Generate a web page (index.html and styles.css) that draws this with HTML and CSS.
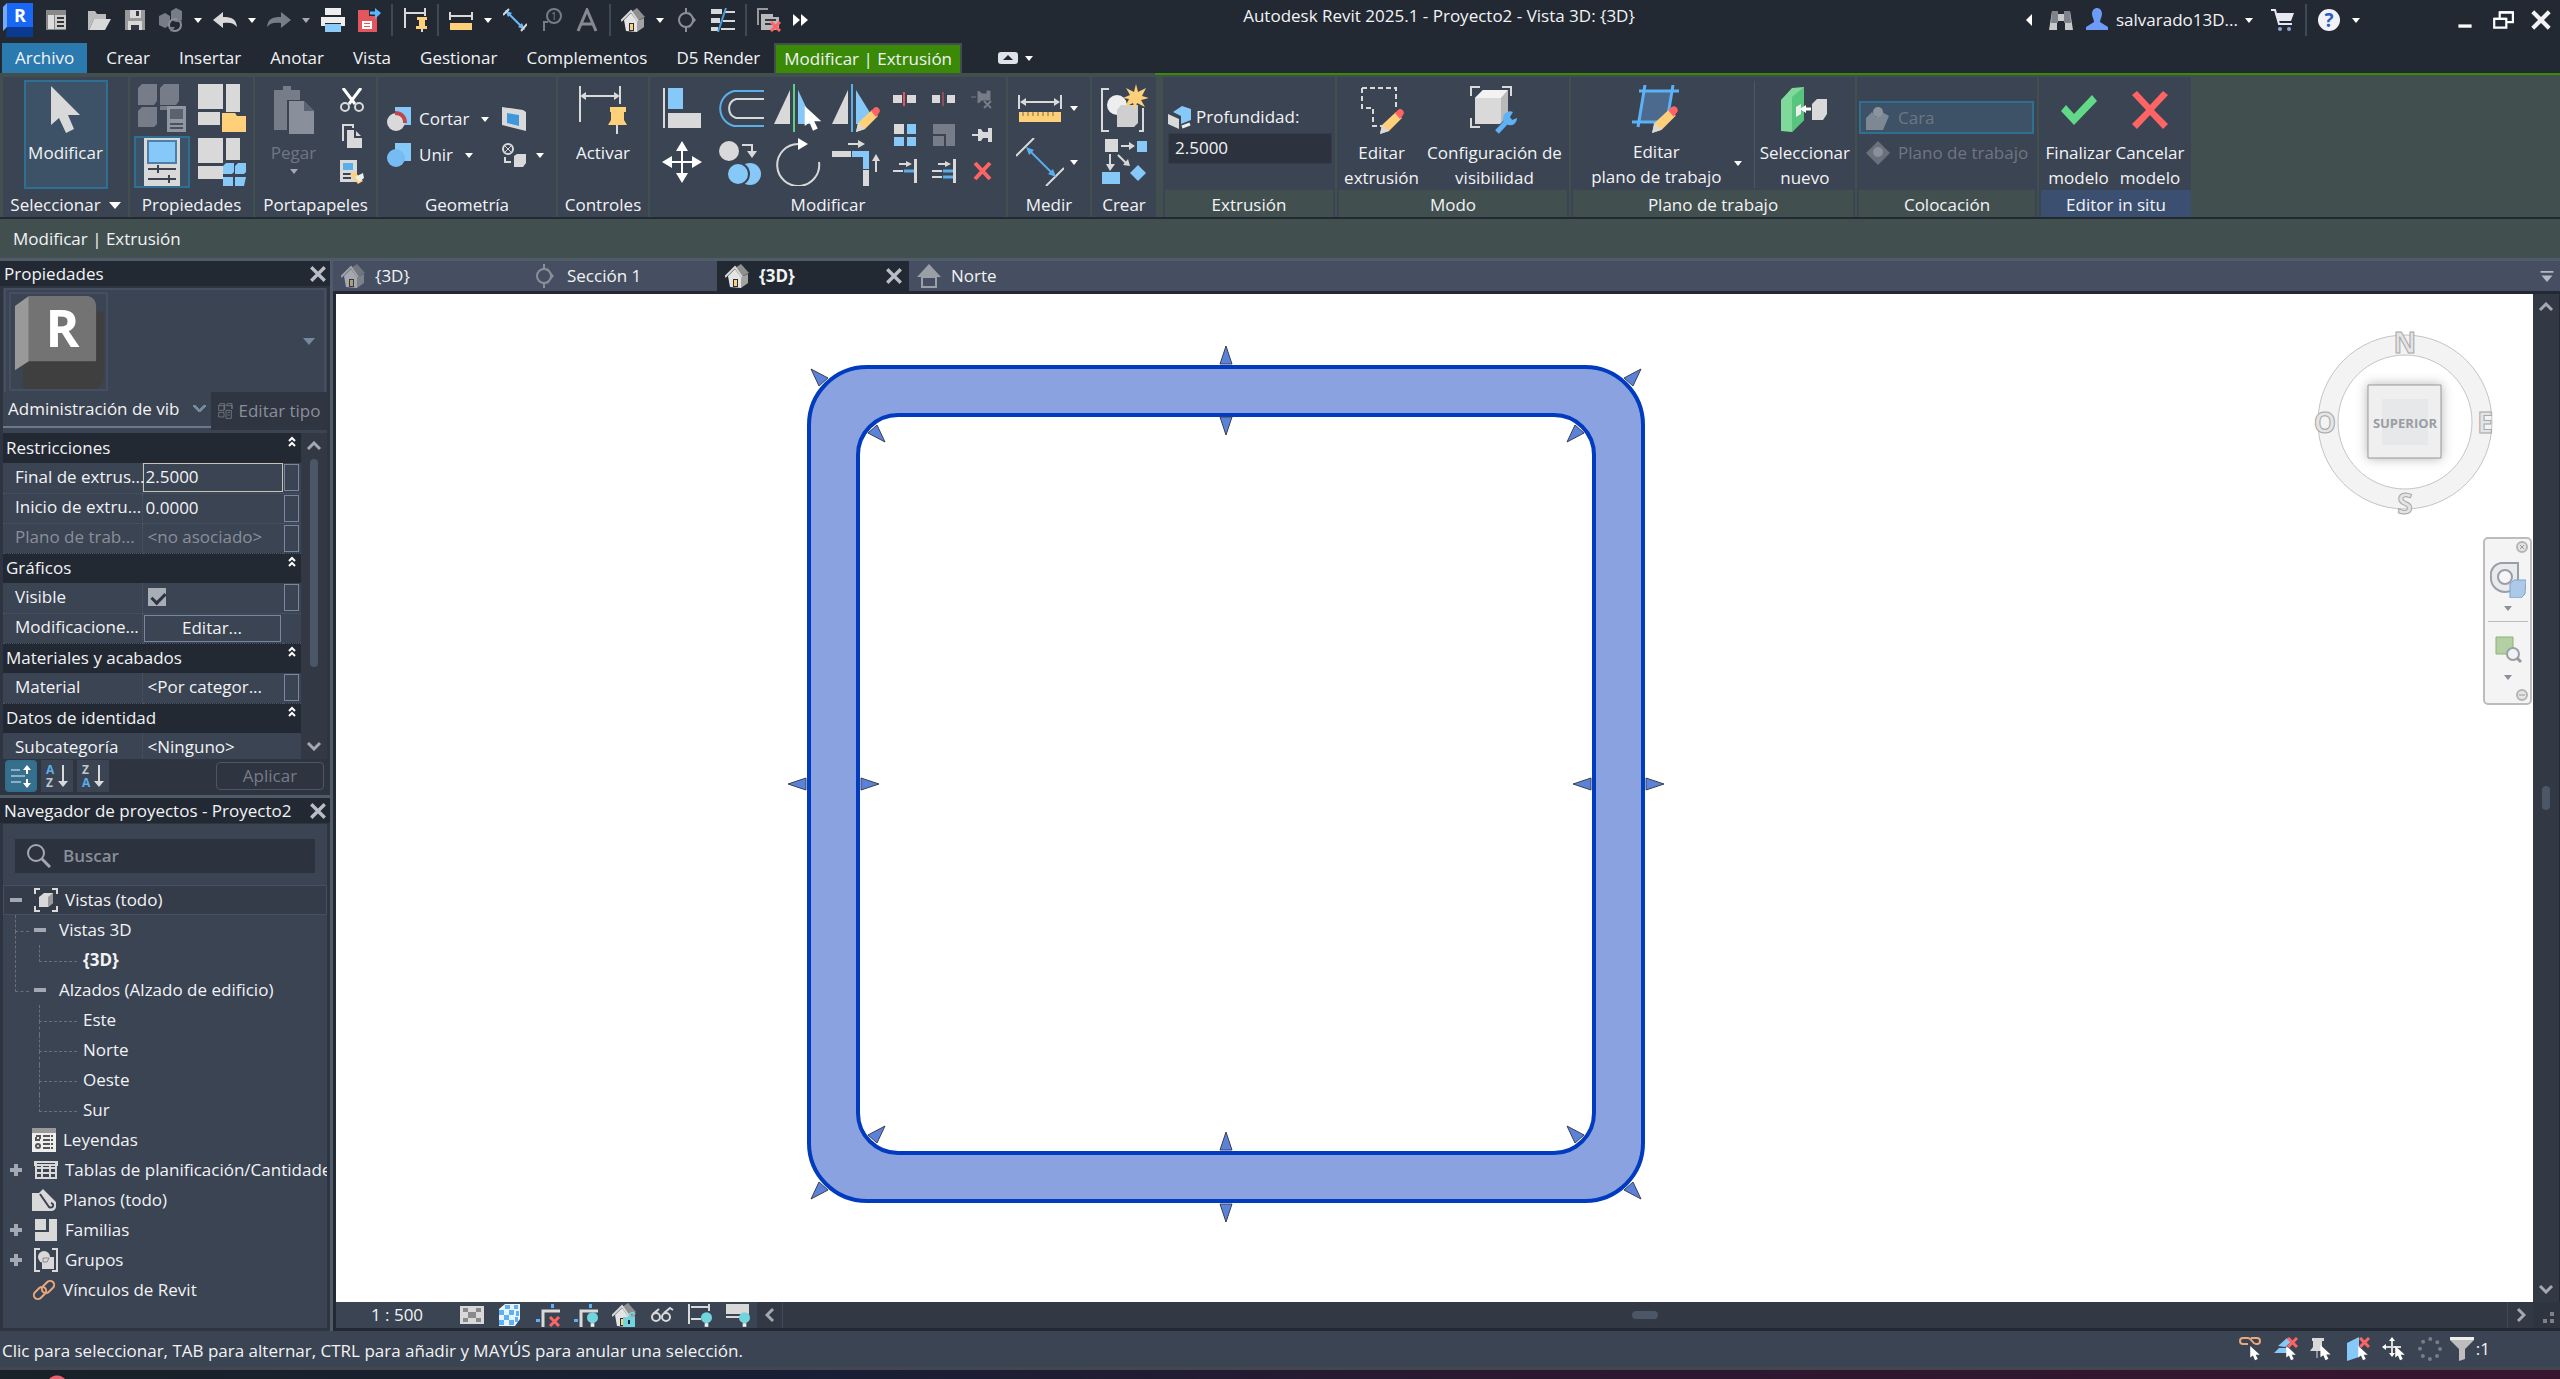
FILE: index.html
```html
<!DOCTYPE html>
<html lang="es">
<head>
    <meta charset="UTF-8">
    <meta name="viewport" content="width=device-width, initial-scale=1.0">
    <title>Autodesk Revit 2025.1 - Proyecto2 - Vista 3D: {3D}</title>
    <link rel="stylesheet" href="styles.css">
</head>
<body>

    <!-- Símbolos reutilizados -->
    <svg class="sprite" aria-hidden="true">
        <symbol id="house" viewBox="0 0 24 24">
            <path d="M3 12 10 5l6 8v11l-11-1z" fill="#e4e4e4"/>
            <path d="m16 13 7-3v9l-7 5z" fill="#a3a3a3"/>
            <path d="m10 4 6-4 8 9-8 4z" fill="#8f8f8f"/>
            <path d="m0 13 10-10 7 10" fill="none" stroke="#d9d9d9" stroke-width="2"/>
            <path d="M8 15h5v8H8z" fill="#2a2f38"/><path d="M9 16h3v6H9z" fill="#ffd07a"/>
        </symbol>
        <symbol id="cursor" viewBox="0 0 14 22">
            <path d="M0 0v17l4-3 3 7 4-2-3-6h6z" fill="#fff"/>
        </symbol>
        <symbol id="pencil" viewBox="0 0 24 26">
            <path d="M0 26 2 17 16 4l6 6L9 23z" fill="#ffd07a"/>
            <path d="M0 26 2 17l7 6z" fill="#d9d9d9"/>
            <path d="m15 5 3-3c3-3 8 2 5 5l-3 4z" fill="#ff6464"/>
        </symbol>
        <symbol id="section" viewBox="0 0 20 24">
            <path d="m11 3 8 9-8 9c7-4 7-14 0-18z" fill="#8a8f99"/>
            <circle cx="9" cy="12" r="7" fill="none" stroke="#8a8f99" stroke-width="2"/>
            <path d="M9 0v5M9 19v5" stroke="#8a8f99" stroke-width="2"/>
        </symbol>
        <symbol id="close" viewBox="0 0 16 16">
            <path d="m2 2 12 12M14 2 2 14" stroke="currentColor" stroke-width="3" fill="none"/>
        </symbol>
        <symbol id="bulb" viewBox="0 0 12 16">
            <circle cx="6" cy="6" r="6" fill="#72d5de"/><path d="M4 12h4v4H4z" fill="#eee"/>
        </symbol>
        <symbol id="up2" viewBox="0 0 10 12">
            <path d="m2 5 3-3 3 3M2 10l3-3 3 3" stroke="#fff" stroke-width="2" fill="none"/>
        </symbol>
    </svg>

    <!-- Barra de título -->
    <header class="titlebar">
        <div class="quick">
            <button class="logo" aria-label="Revit"><svg viewBox="0 0 32 34"><path d="M4 0h26v24H4z" fill="#1868f5"/><path d="M0 4 4 0v24l-4 4z" fill="#74a9ff"/><path d="M4 24h26v10H3z" fill="#0b3a92"/><text x="17" y="19" text-anchor="middle" font-size="18" font-weight="700" fill="#fff">R</text></svg></button>
            <button class="q first" aria-label="Inicio"><svg viewBox="0 0 24 24"><path d="M2 2h20v20H2z" fill="#888"/><path d="M4 7h6v14H4z" fill="#ddd"/><path d="M11 7h11v14H11z" fill="#ccc"/><path d="M13 10h7M13 14h7M13 18h7" stroke="#333" stroke-width="2"/></svg></button>
            <button class="q" aria-label="Abrir"><svg viewBox="0 0 24 24"><path d="M1 22V3h7l2 3h9v5H7L2 22z" fill="#bbb"/><path d="M7 11h17l-6 11H2z" class="w"/></svg></button>
            <button class="q" aria-label="Guardar"><svg viewBox="0 0 24 24"><path d="M2 2h20v20H2z" fill="#999"/><path d="M7 2h11v8H7zM5 13h14v9H5z" class="w"/><path d="M13 3h3v5h-3zM8 17h8v5H8z" fill="#333a45"/></svg></button>
            <button class="q" aria-label="Sincronizar"><svg viewBox="0 0 24 24"><path d="m0 8 6-3 5 3v9l-5 3-6-3zM12 3l5-3 6 3v9l-6 2-5-2z" class="g"/><circle cx="16" cy="17" r="6" class="ln" stroke="#8b8f97"/><path d="m20 9 3 5h-6zM12 24l-2-5h6z" class="g"/></svg></button>
            <button class="more" aria-label="Opciones de sincronización"><i class="caret"></i></button>
            <button class="q" aria-label="Deshacer"><svg viewBox="0 0 24 24"><path d="m0 12 10-8v5c9 0 13 2 14 10-3-4-7-5-14-4v5z" class="w"/></svg></button>
            <button class="more" aria-label="Lista deshacer"><i class="caret"></i></button>
            <button class="q" aria-label="Rehacer"><svg viewBox="0 0 24 24"><path d="M24 12 14 4v5C5 9 1 11 0 19c3-4 7-5 14-4v5z" class="g"/></svg></button>
            <button class="more dim" aria-label="Lista rehacer"><i class="caret"></i></button>
            <button class="q" aria-label="Imprimir"><svg viewBox="0 0 24 24"><path d="M4 0h16v7H4zM0 9h24v9h-4v-3H4v3H0z" fill="#eee"/><path d="M4 16h16v8H4z" fill="#8ccbf7"/></svg></button>
            <button class="q" aria-label="Exportar PDF"><svg viewBox="0 0 24 24"><path d="M1 2h11v6h8v16H1z" fill="#e4565e"/><path d="M13 5h6" stroke="#5db5ff" stroke-width="3"/><path d="m18 0 6 5-6 6z" fill="#5db5ff"/><path d="M5 13h10v8H5z" fill="#fff"/><path d="M7 15h6v1H7zM7 18h6v1H7z" fill="#e4565e"/></svg></button>
            <i class="sep"></i>
            <button class="q" aria-label="Activar controles"><svg viewBox="0 0 24 24"><path d="M2 0v20M22 0v8M2 5h20" class="lw"/><path d="M14 9h10v3h-2v6h3v3H13v-3h3v-6h-2z" class="y"/><path d="M19 21v3" class="lw"/></svg></button>
            <i class="sep"></i>
            <button class="q" aria-label="Medir"><svg viewBox="0 0 24 24"><path d="M1 4v8M23 4v8M1 8h22" class="lw"/><path d="M1 15h22v7H1z" class="y"/></svg></button>
            <button class="more" aria-label="Tipos de medida"><i class="caret"></i></button>
            <button class="q" aria-label="Cota alineada"><svg viewBox="0 0 24 24"><path d="m5 5 14 14" stroke="#6bb8f7" stroke-width="2"/><path d="m2 2 7 3-4 4zM22 22l-7-3 4-4z" fill="#6bb8f7"/><path d="m0 7 6-6M18 23l6-7" class="lw"/></svg></button>
            <button class="q" aria-label="Etiqueta"><svg viewBox="0 0 24 24"><circle cx="15" cy="8" r="7" class="ln" stroke="#777d88"/><text x="15" y="12" font-size="11" text-anchor="middle" class="g">1</text><path d="M9 14H5v9" class="ln" stroke="#777d88"/></svg></button>
            <button class="q" aria-label="Texto"><svg viewBox="0 0 24 24"><path d="m3 23 9-21 9 21M6 16h12" fill="none" stroke="#858992" stroke-width="3"/></svg></button>
            <i class="sep"></i>
            <button class="q" aria-label="Vista 3D"><svg><use href="#house"/></svg></button>
            <button class="more" aria-label="Vistas 3D"><i class="caret"></i></button>
            <button class="q" aria-label="Sección"><svg><use href="#section"/></svg></button>
            <button class="q" aria-label="Líneas finas"><svg viewBox="0 0 24 24"><path d="M0 1h11v5H0zM0 10h9v5H0zM0 19h7v4H0z" class="w"/><path d="M14 4h10M12 13h12M10 21h14" class="lw"/><path d="M15 0 7 24" stroke="#4d9fe0" stroke-width="2"/></svg></button>
            <i class="sep"></i>
            <button class="q" aria-label="Cerrar inactivas"><svg viewBox="0 0 24 24"><path d="M1 17V1h10" class="ln" stroke="#999"/><path d="M4 6h12v3h6v13H4z" fill="#b8b8b8"/><path d="M8 12h11M8 16h8" stroke="#333a45" stroke-width="2"/><path d="m14 14 9 9m0-9-9 9" stroke="#ff6464" stroke-width="3"/></svg></button>
            <button class="q small" aria-label="Más"><svg viewBox="0 0 16 12"><path d="m0 0 7 6-7 6zM8 0l7 6-7 6z" fill="#fff"/></svg></button>
        </div>
        <h1 class="title">Autodesk Revit 2025.1 - Proyecto2 - Vista 3D: {3D}</h1>
        <div class="account">
            <button class="q small" aria-label="Contraer búsqueda"><svg viewBox="0 0 16 12"><path d="M11 0v12L5 6z" fill="#fff"/></svg></button>
            <button class="q" aria-label="Buscar"><svg viewBox="0 0 24 24"><path d="M3 3h6v3h6V3h6l3 19h-8v-9h-8v9H0z" fill="#c9c9c9"/><path d="M3 3h6v12H2zM15 3h6l1 12h-7z" fill="#7d828b"/></svg></button>
            <button class="user"><svg viewBox="0 0 24 24"><path d="M7 6c0-8 10-8 10 0 0 3-2 5-2 8l8 5v3H1v-3l8-5c0-3-2-5-2-8z" fill="#6d9bf5"/></svg>salvarado13D...<i class="caret"></i></button>
            <button class="q" aria-label="Tienda"><svg viewBox="0 0 24 24"><path d="M0 2h4l4 14h13" fill="none" stroke="#e7e9f2" stroke-width="2"/><path d="M4 5h19l-3 8H7z" fill="#e7e9f2"/><circle cx="9" cy="21" r="2" fill="#8fa4d8"/><circle cx="18" cy="21" r="2" fill="#8fa4d8"/></svg></button>
            <i class="sep"></i>
            <button class="q" aria-label="Ayuda"><svg viewBox="0 0 24 24"><circle cx="12" cy="12" r="11" fill="#f1f3f8"/><text x="12" y="19" text-anchor="middle" font-size="19" font-weight="700" fill="#2f5fc0">?</text></svg></button>
            <button class="more" aria-label="Opciones de ayuda"><i class="caret"></i></button>
        </div>
        <div class="window-buttons">
            <button aria-label="Minimizar"><svg viewBox="0 0 20 20"><path d="M4 14h12v3H4z" fill="#fff"/></svg></button>
            <button aria-label="Restaurar"><svg viewBox="0 0 20 20"><path d="M7 8V3h12v9h-5M2 9h11v8H2z" fill="none" stroke="#fff" stroke-width="2"/><path d="M2 8h11v2H2zM7 2h12v2H7z" fill="#fff"/></svg></button>
            <button aria-label="Cerrar"><svg><use href="#close"/></svg></button>
        </div>
    </header>

    <!-- Pestañas de la cinta -->
    <nav class="ribbon-tabs">
        <button class="rtab file">Archivo</button>
        <button class="rtab">Crear</button>
        <button class="rtab">Insertar</button>
        <button class="rtab">Anotar</button>
        <button class="rtab">Vista</button>
        <button class="rtab">Gestionar</button>
        <button class="rtab">Complementos</button>
        <button class="rtab">D5 Render</button>
        <button class="rtab active">Modificar | Extrusión</button>
        <button class="collapse" aria-label="Contraer cinta"><svg viewBox="0 0 20 12"><rect width="20" height="12" rx="3" fill="#dfe2ea"/><path d="m10 3 5 5H5z" fill="#222933"/></svg><i class="caret"></i></button>
    </nav>

    <!-- Cinta de opciones -->
    <section class="ribbon">
        <div class="group">
            <div class="panel p-select">
                <div class="tools">
                    <button class="big on"><svg viewBox="0 0 48 48"><path d="M9 0v39l8-7 7 15 8-4-6-14h12z" class="w"/></svg>Modificar</button>
                </div>
                <h2>Seleccionar <i class="caret wide"></i></h2>
            </div>
            <div class="panel p-props">
                <div class="tools grid2">
                    <button class="ico" aria-label="Propiedades de tipo"><svg viewBox="0 0 48 48"><path d="M0 4 4 0h15v17l-3 4H0zM22 4l4-4h15v17l-3 4H22zM0 27l4-4h15v17l-3 3H0zM22 22h17v4H22z" class="g"/><path d="M29 22h19v26H29z" fill="#9197a2"/><path d="M32 25h13v10H32z" fill="#5b6270"/><path d="M32 40h13M32 44h13" stroke="#4a5160" stroke-width="2"/></svg></button>
                    <button class="ico" aria-label="Categorías de familia"><svg viewBox="0 0 48 48"><path d="M0 0h25v25H0zM28 0h14v28H28zM0 28h22v13H0z" class="w"/><path d="M24 29h13l2 3h9v16H24z" class="y"/></svg></button>
                    <button class="ico on" aria-label="Propiedades"><svg viewBox="0 0 48 48"><path d="M6 0h36v48H6z" class="w"/><path d="M10 3h28v22H10z" class="b" stroke="#4d7fa8" stroke-width="2"/><path d="M10 31h28M10 41h28M20 27v8M31 37v8" stroke="#3b4453" stroke-width="2"/></svg></button>
                    <button class="ico" aria-label="Tipos de familia"><svg viewBox="0 0 48 48"><path d="M0 0h25v25H0zM28 0h14v22H28zM0 28h25v13H0z" class="w"/><path d="m25 28 3-3h8v9l-2 2h-9zM37 28l3-3h8v9l-2 2h-9zM25 39h10v9H25zM37 39h11l-2 9h-9z" class="b"/></svg></button>
                </div>
                <h2>Propiedades</h2>
            </div>
            <div class="panel p-clip">
                <div class="tools">
                    <button class="big off" disabled><svg viewBox="0 0 48 48"><path d="M4 4h9V0h8v4h9v10H17v30H4z" fill="#777d88"/><path d="M19 15h15l10 10v23H19z" fill="#8a909b"/><path d="M34 15v10h10z" fill="#5b6270"/></svg>Pegar<i class="caret"></i></button>
                    <div class="stack">
                        <button class="sm" aria-label="Cortar al portapapeles"><svg viewBox="0 0 24 24"><path d="M3 0 15 16M21 0 9 16" stroke="#fff" stroke-width="3"/><circle cx="5" cy="19" r="4" class="lw"/><circle cx="19" cy="19" r="4" class="lw"/></svg></button>
                        <button class="sm" aria-label="Copiar al portapapeles"><svg viewBox="0 0 24 24"><path d="M3 17V1h10v3" class="lw"/><path d="M7 6h8l7 7v11H7z" class="w"/><path d="M15 6v7h7" fill="none" stroke="#3b4453" stroke-width="2"/></svg></button>
                        <button class="sm" aria-label="Igualar propiedades"><svg viewBox="0 0 24 24"><path d="M0 0h17v22H0z" class="w"/><path d="M3 3h10v7H3z" fill="#5aaeea"/><path d="M3 14h8M3 18h8" stroke="#3b4453" stroke-width="2"/><path d="m10 14 5-2 8 9-5 3z" class="y"/><path d="m15 17 8-4 1 5-5 4z" fill="#eee"/></svg></button>
                    </div>
                </div>
                <h2>Portapapeles</h2>
            </div>
            <div class="panel p-geo">
                <div class="tools geo">
                    <div class="line">
                        <button class="row"><svg viewBox="0 0 24 24"><path d="M8 0h16v18H8z" class="b"/><circle cx="9" cy="15" r="9" class="w"/><path d="M8 6c6 0 10 4 10 10" fill="none" stroke="#c0444c" stroke-width="4"/></svg>Cortar<i class="caret"></i></button>
                        <button class="sm" aria-label="Dividir cara"><svg viewBox="0 0 24 24"><path d="m0 0 21 3 3 2v19L0 18z" class="w"/><path d="m5 6 12 2v11L5 16z" fill="#3f98dc"/></svg></button>
                    </div>
                    <div class="line">
                        <button class="row"><svg viewBox="0 0 24 24"><path d="M8 0h16v18H8z" class="b"/><circle cx="9" cy="15" r="9" fill="#76bcf2"/></svg>Unir<i class="caret"></i></button>
                        <button class="sm wide" aria-label="Uniones de muro"><svg viewBox="0 0 24 24"><circle cx="6" cy="6" r="5" class="lw"/><path d="m3 3 6 6M9 3 3 9" stroke="#d9d9d9"/><path d="m12 13 3-2h9v9l-3 4h-9z" class="w"/><path d="M3 14v5h6" class="lw"/></svg><i class="caret"></i></button>
                    </div>
                </div>
                <h2>Geometría</h2>
            </div>
            <div class="panel p-ctrl">
                <div class="tools">
                    <button class="big"><svg viewBox="0 0 48 48"><path d="M1 0v36M41 0v18M3 10h36" class="lw"/><path d="m1 10 6-4v8zM41 10l-6-4v8z" class="w"/><path d="M31 21h16v5h-2v8l3 5H29l3-5v-8h-1z" class="y"/><path d="M38 39v9" class="lw"/></svg>Activar</button>
                </div>
                <h2>Controles</h2>
            </div>
            <div class="panel p-mod">
                <div class="tools">
                    <div class="grid4">
                        <button class="ico" aria-label="Alinear"><svg viewBox="0 0 48 48"><path d="M6 4v40" class="lw"/><path d="M10 4h15v21H10z" class="b"/><path d="M10 29h33v15H10z" class="w"/></svg></button>
                        <button class="ico" aria-label="Desfase"><svg viewBox="0 0 48 48"><path d="M48 7H18a18 18 0 0 0 0 35h30" class="ln" stroke="#5aaeea"/><path d="M48 15H20a10 10 0 0 0 0 19h28" class="lw"/></svg></button>
                        <button class="ico" aria-label="Simetría por eje"><svg viewBox="0 0 48 48"><path d="M16 6v34H0z" class="w"/><path d="m24 6 16 34H24z" class="b"/><path d="M20 0v48" stroke="#5ed083" stroke-width="2"/><use href="#cursor" x="30" y="22" width="18" height="26"/></svg></button>
                        <button class="ico" aria-label="Simetría dibujar eje"><svg viewBox="0 0 48 48"><path d="M16 6v34H0z" class="w"/><path d="m24 6 16 26-10 8h-6z" class="b"/><path d="M20 0v48" stroke="#5aaeea" stroke-width="2"/><use href="#pencil" x="24" y="22" width="24" height="26"/></svg></button>
                        <button class="ico" aria-label="Desplazar"><svg viewBox="0 0 48 48"><path d="M24 8v32M8 24h32" stroke="#fff" stroke-width="2"/><path d="m24 3 6 10H18zM24 45l6-10H18zM4 24l10-6v12zM44 24l-10-6v12z" fill="#fff"/></svg></button>
                        <button class="ico" aria-label="Copiar"><svg viewBox="0 0 48 48"><circle cx="13" cy="13" r="10" class="w"/><circle cx="34" cy="36" r="11" class="b"/><circle cx="22" cy="36" r="11" class="b" stroke="#3b4453" stroke-width="2"/><path d="M26 7h10v8" class="lw"/><path d="M31 13h10l-5 7z" class="w"/></svg></button>
                        <button class="ico" aria-label="Girar"><svg viewBox="0 0 48 48"><path d="M24 6a21 21 0 1 0 21 18" class="lw"/><path d="m24 0 10 6-10 6z" fill="#fff"/></svg></button>
                        <button class="ico" aria-label="Recortar en esquina"><svg viewBox="0 0 48 48"><path d="M0 13h19v6H0zM31 32h6v16h-6z" class="w"/><path d="M20 13h17v18h-6V19H20z" class="b"/><path d="M16 6h14M44 34V20" class="lw"/><path d="m26 2 7 4-7 4zM40 23l4-7 4 7z" class="w"/></svg></button>
                    </div>
                    <div class="grid3">
                        <button class="sm" aria-label="Dividir elemento"><svg viewBox="0 0 24 24"><path d="M0 8h9v8H0zM14 8h9v8h-9z" class="w"/><path d="M11 5v14" stroke="#e4565e" stroke-width="2"/></svg></button>
                        <button class="sm" aria-label="Dividir con separación"><svg viewBox="0 0 24 24"><path d="M0 8h8v8H0zM15 8h8v8h-8z" class="w"/><path d="M11 5v14" stroke="#e4565e" stroke-width="1"/></svg></button>
                        <button class="sm" aria-label="Desbloquear"><svg viewBox="0 0 24 24"><path d="M0 10h5M7 4l3 2v8l-3 2zM10 7h6V4h3v9h-9z" class="g" stroke="#777d88"/><path d="m13 14 7 7m0-7-7 7" stroke="#777d88" stroke-width="2"/></svg></button>
                        <button class="sm" aria-label="Matriz"><svg viewBox="0 0 24 24"><path d="M1 1h10v10H1z" class="w"/><path d="M14 1h9v10h-9zM1 14h10v9H1zM14 14h9v9h-9z" class="b"/></svg></button>
                        <button class="sm" aria-label="Escala"><svg viewBox="0 0 24 24"><path d="M1 1h22v22H14V11H1z" class="g"/><path d="M1 13h11v10H1z" class="g"/></svg></button>
                        <button class="sm" aria-label="Bloquear"><svg viewBox="0 0 24 24"><path d="M1 12h6" class="lw"/><path d="M7 6h3l2 3h5V5h4v14h-4v-4h-5l-2 3H7z" class="w"/></svg></button>
                        <button class="sm" aria-label="Recortar un elemento"><svg viewBox="0 0 24 24"><path d="M0 12h10" class="lw"/><path d="M11 12h11" stroke="#5aaeea" stroke-width="3"/><path d="M21 0h3v24h-3z" class="w"/><path d="M6 5h8" class="lw"/><path d="m13 2 6 3-6 3z" class="w"/></svg></button>
                        <button class="sm" aria-label="Recortar varios elementos"><svg viewBox="0 0 24 24"><path d="M0 12h10M0 18h10" class="lw"/><path d="M11 12h11M11 18h11" stroke="#5aaeea" stroke-width="3"/><path d="M21 0h3v24h-3z" class="w"/><path d="M6 5h8" class="lw"/><path d="m13 2 6 3-6 3z" class="w"/></svg></button>
                        <button class="sm" aria-label="Suprimir"><svg viewBox="0 0 24 24"><path d="m4 4 15 16M19 4 4 20" stroke="#ff6464" stroke-width="4"/></svg></button>
                    </div>
                </div>
                <h2>Modificar</h2>
            </div>
            <div class="panel p-meas">
                <div class="tools grid2">
                    <button class="ico" aria-label="Medir distancia"><svg viewBox="0 0 48 48"><path d="M3 11v14M45 11v14M5 18h38" class="lw"/><path d="m4 18 6-4v8zM44 18l-6-4v8z" class="w"/><path d="M3 28h42v10H3z" class="y"/><path d="M7 28v4m5-4v4m5-4v4m5-4v4m5-4v4m5-4v4m5-4v4" stroke="#7d6a45"/></svg></button>
                    <button class="more" aria-label="Opciones de medir"><i class="caret"></i></button>
                    <button class="ico" aria-label="Cota"><svg viewBox="0 0 48 48"><path d="m0 18 18-18M30 48l18-18" class="lw"/><path d="m13 12 24 24" stroke="#5aaeea" stroke-width="2"/><path d="m10 9 8 3-5 5zM40 39l-8-3 5-5z" fill="#5aaeea"/></svg></button>
                    <button class="more" aria-label="Opciones de cota"><i class="caret"></i></button>
                </div>
                <h2>Medir</h2>
            </div>
            <div class="panel p-new">
                <div class="tools grid2">
                    <button class="ico" aria-label="Crear grupo"><svg viewBox="0 0 48 48"><path d="M9 5H2v42h7M39 47h4V24" class="lw"/><circle cx="17" cy="21" r="10" fill="#eee"/><path d="m17 26 4-5h17v18l-4 4H17z" fill="#cfcfcf"/><path d="M36 0l2 8 8-4-4 8 7 2-8 2 4 7-8-4-2 7-2-7-8 4 4-8-6-1 7-3-4-7 8 4z" class="y"/></svg></button>
                    <button class="ico" aria-label="Crear similar"><svg viewBox="0 0 48 48"><path d="M5 1h13v13H5z" class="w"/><path d="M37 3h10v11H37zM2 34h18v12H2zM38 27l8 8-8 8-8-8z" class="b"/><path d="M21 8h10M10 16v11M18 17l8 8" class="lw"/><path d="m29 4 6 4-6 4zM6 26h9l-5 7zM23 27l7 1-2-7z" class="w"/></svg></button>
                </div>
                <h2>Crear</h2>
            </div>
        </div>
        <div class="group context">
            <div class="panel p-ext">
                <div class="tools depth">
                    <label for="depth"><svg viewBox="0 0 24 24"><path d="m0 9 11 5v10L0 19z" class="w"/><path d="m5 7 9-6 9 3v11l-10 4v-8z" class="b"/><path d="m14 22 8-3" stroke="#eee" stroke-width="3"/></svg>Profundidad:</label>
                    <input id="depth" type="text" value="2.5000">
                </div>
                <h2>Extrusión</h2>
            </div>
            <div class="panel p-mode">
                <div class="tools">
                    <button class="big"><svg viewBox="0 0 48 48"><path d="M4 2h34v22M4 2v20h11v18h10" fill="none" stroke="#d9d9d9" stroke-width="2" stroke-dasharray="5 3"/><use href="#pencil" x="22" y="22" width="24" height="26"/></svg>Editar<br>extrusión</button>
                    <button class="big"><svg viewBox="0 0 48 48"><path d="M1 10V1h9M32 1h9v9M1 32v9h9" class="lw"/><path d="m5 12 8-8h25v25l-8 9H5z" class="w"/><path d="m5 12 8-8h25l-7 8z" fill="#f2f2f2"/><path d="m31 12 7-8v25l-7 8z" fill="#b9b9b9"/><path d="m27 46 13-14" stroke="#5db1f5" stroke-width="5"/><path d="M43 26a7 7 0 1 0 4 6l-5 2-2-3z" fill="#5db1f5"/></svg>Configuración de<br>visibilidad</button>
                </div>
                <h2>Modo</h2>
            </div>
            <div class="panel p-plane">
                <div class="tools">
                    <button class="big plane"><svg viewBox="0 0 48 48"><path d="M13 6h27l-6 31H7z" fill="#4b6a8d"/><path d="M13 0 6 42M41 0l-5 30M7 6h40M0 37h32" stroke="#5db1f5" stroke-width="3"/><use href="#pencil" x="18" y="20" width="30" height="28"/></svg>Editar<br>plano de trabajo<i class="caret"></i></button>
                    <button class="big ruled"><svg viewBox="0 0 48 48"><path d="m0 14 11-12 12-1v33L11 46l-11-1z" fill="#7ed99b"/><path d="m11 11 12-10v33L11 46z" fill="#57c57d"/><path d="m15 21 5-3v10l-5 3z" fill="#eee"/><path d="M21 23h9" stroke="#fff" stroke-width="3"/><path d="m19 23 6-4v8z" fill="#fff"/><path d="m31 18 5-5h10v15l-4 6H31z" class="w"/></svg>Seleccionar<br>nuevo</button>
                </div>
                <h2>Plano de trabajo</h2>
            </div>
            <div class="panel p-place">
                <div class="tools placing">
                    <button class="row off on" disabled><svg viewBox="0 0 24 24"><path d="m0 12 6-6 4 5 6-5 7 4-6 14H0z" fill="#7d8894"/><circle cx="12" cy="6" r="5" fill="#8a949f"/></svg>Cara</button>
                    <button class="row off" disabled><svg viewBox="0 0 24 24"><path d="m12 0 12 12-12 12L0 12z" fill="#6a717d"/><circle cx="12" cy="11" r="5" fill="#8a909b"/></svg>Plano de trabajo</button>
                </div>
                <h2>Colocación</h2>
            </div>
            <div class="panel p-edit">
                <div class="tools">
                    <button class="big"><svg viewBox="0 0 48 48"><path d="m6 25 5-6 8 9 18-19 5 6-23 24z" fill="#62d987"/></svg>Finalizar<br>modelo</button>
                    <button class="big"><svg viewBox="0 0 48 48"><path d="m6 9 5-4 13 14L37 5l5 4-14 15 14 14-5 5-13-14-13 14-5-5 14-14z" class="r"/></svg>Cancelar<br>modelo</button>
                </div>
                <h2>Editor in situ</h2>
            </div>
        </div>
    </section>

    <div class="options-bar">Modificar | Extrusión</div>

    <main class="workspace">
        <!-- Paletas laterales -->
        <aside class="side">
            <section class="palette props">
                <header><h2>Propiedades</h2><button aria-label="Cerrar propiedades"><svg><use href="#close"/></svg></button></header>
                <div class="palette-body">
                    <button class="type-box" aria-label="Selector de tipo">
                        <svg viewBox="0 0 96 96"><path d="M12 68h68V18h14v66a12 12 0 0 1-12 12H12z" fill="#3f3f3f"/><path d="m4 12 14-10v66L4 77z" fill="#999"/><path d="M18 2h60a10 10 0 0 1 8 10v56H18z" fill="#737373"/><text x="52" y="54" text-anchor="middle" font-size="52" font-weight="700" fill="#fff">R</text></svg>
                        <i class="caret wide"></i>
                    </button>
                    <div class="type-row">
                        <select aria-label="Familia"><option>Administración de vib</option></select>
                        <button disabled><svg viewBox="0 0 24 24"><path d="M1 4h8v7H1zM12 4h9v5M1 14h8v7H1zM1 4l2-3h7v8l-1 2M12 4l2-3h7v8M12 11h8v12h-8zM14 14h4M14 18h4" fill="none" stroke="#8a8f99"/></svg>Editar tipo</button>
                    </div>
                    <div class="prop-grid">
                        <table>
                            <colgroup><col class="c-name"><col class="c-value"><col class="c-link"></colgroup>
                            <tr class="cat"><th colspan="3">Restricciones<svg><use href="#up2"/></svg></th></tr>
                            <tr><td><label for="p1">Final de extrus...</label></td><td><input id="p1" class="focus" type="text" value="2.5000"></td><td><button aria-label="Asociar final"></button></td></tr>
                            <tr><td><label for="p2">Inicio de extru...</label></td><td><input id="p2" type="text" value="0.0000"></td><td><button aria-label="Asociar inicio"></button></td></tr>
                            <tr class="dim"><td>Plano de trab...</td><td class="val">&lt;no asociado&gt;</td><td><button aria-label="Asociar plano"></button></td></tr>
                            <tr class="cat"><th colspan="3">Gráficos<svg><use href="#up2"/></svg></th></tr>
                            <tr><td><label for="p3">Visible</label></td><td class="val"><input id="p3" type="checkbox" checked></td><td><button aria-label="Asociar visible"></button></td></tr>
                            <tr><td>Modificacione...</td><td><button class="edit">Editar...</button></td><td></td></tr>
                            <tr class="cat"><th colspan="3">Materiales y acabados<svg><use href="#up2"/></svg></th></tr>
                            <tr><td>Material</td><td class="val">&lt;Por categor...</td><td><button aria-label="Asociar material"></button></td></tr>
                            <tr class="cat"><th colspan="3">Datos de identidad<svg><use href="#up2"/></svg></th></tr>
                            <tr><td>Subcategoría</td><td class="val">&lt;Ninguno&gt;</td><td></td></tr>
                        </table>
                        <div class="vscroll">
                            <button aria-label="Subir"><svg viewBox="0 0 16 10"><path d="m2 8 6-6 6 6" class="chev"/></svg></button>
                            <i class="thumb"></i>
                            <button aria-label="Bajar"><svg viewBox="0 0 16 10"><path d="m2 2 6 6 6-6" class="chev"/></svg></button>
                        </div>
                    </div>
                    <div class="sort-row">
                        <button class="on" aria-label="Agrupar"><svg viewBox="0 0 24 24"><path d="M2 6h9M2 12h14M2 18h10" stroke="#8fb0c4" stroke-width="2"/><path d="M18 5v5M18 15v5" stroke="#fff" stroke-width="2"/><path d="m18 1 4 5h-8zM18 24l4-5h-8z" fill="#fff"/></svg></button>
                        <button aria-label="Orden ascendente"><svg viewBox="0 0 24 24"><text x="1" y="10" font-size="12" font-weight="700" fill="#5aaeea">A</text><text x="1" y="23" font-size="12" font-weight="700" fill="#c0c4cc">Z</text><path d="M18 1v17" class="lw"/><path d="m13 17 5 6 5-6z" class="w"/></svg></button>
                        <button aria-label="Orden descendente"><svg viewBox="0 0 24 24"><text x="1" y="10" font-size="12" font-weight="700" fill="#c0c4cc">Z</text><text x="1" y="23" font-size="12" font-weight="700" fill="#5aaeea">A</text><path d="M18 1v17" class="lw"/><path d="m13 17 5 6 5-6z" class="w"/></svg></button>
                        <button class="apply" disabled>Aplicar</button>
                    </div>
                </div>
            </section>
            <section class="palette browser">
                <header><h2>Navegador de proyectos - Proyecto2</h2><button aria-label="Cerrar navegador"><svg><use href="#close"/></svg></button></header>
                <div class="palette-body">
                    <div class="search">
                        <svg viewBox="0 0 24 24"><circle cx="9" cy="9" r="8" class="ln" stroke="#a3a8b2"/><path d="m15 15 8 8" stroke="#a3a8b2" stroke-width="3"/></svg>
                        <input type="text" placeholder="Buscar" aria-label="Buscar">
                    </div>
                    <ul class="tree">
                        <li class="selected"><i class="minus"></i><svg viewBox="0 0 24 24"><path d="M1 6V1h5M18 1h5v5M1 18v5h5M18 23h5v-5" class="lw"/><path d="m5 9 5-4h9v10l-5 4H5z" class="w"/><path d="m14 9 5-4v10l-5 4z" fill="#999"/></svg>Vistas (todo)</li>
                        <li class="l2"><i class="minus"></i>Vistas 3D</li>
                        <li class="l3 last active">{3D}</li>
                        <li class="l2 last"><i class="minus"></i>Alzados (Alzado de edificio)</li>
                        <li class="l3">Este</li>
                        <li class="l3">Norte</li>
                        <li class="l3">Oeste</li>
                        <li class="l3 last">Sur</li>
                        <li class="leaf"><svg viewBox="0 0 24 24"><path d="M0 0h24v24H0z" fill="#eee"/><path d="M0 0h24v5H0z" fill="#999"/><path d="M4 8h4v4H4zM11 8h10M11 12h10M11 16h10M11 20h10" fill="none" stroke="#555" stroke-width="2" stroke-dasharray="7 1"/><circle cx="6" cy="18" r="2" fill="none" stroke="#555" stroke-width="2"/></svg>Leyendas</li>
                        <li><i class="plus"></i><svg viewBox="0 0 24 24"><path d="M1 4h22v3H1zM1 10h22M1 15h22M1 20h22M2 4v17M8 8v13M16 8v13M22 4v17" class="lw"/></svg>Tablas de planificación/Cantidades</li>
                        <li class="leaf"><svg viewBox="0 0 24 24"><path d="M0 5h7l4-4 13 13v5a5 5 0 0 1-5 4H0z" class="w"/><path d="m8 6 9 13c4 2 6-3 2-4" fill="none" stroke="#3b4453" stroke-width="2"/></svg>Planos (todo)</li>
                        <li><i class="plus"></i><svg viewBox="0 0 24 24"><path d="M1 1h11v11H1zM15 1h8v22H1v-9h14z" class="w"/></svg>Familias</li>
                        <li><i class="plus"></i><svg viewBox="0 0 24 24"><path d="M6 1H1v22h5M18 1h5v22h-5" class="lw"/><circle cx="10" cy="9" r="6" class="w"/><path d="M8 9h12v12H8z" class="w"/><path d="M9 10h6l-2 4H9z" fill="none" stroke="#888"/></svg>Grupos</li>
                        <li class="leaf"><svg viewBox="0 0 24 24"><rect x="9" y="5" width="14" height="8" rx="4" transform="rotate(-45 16 9)" class="ln" stroke="#e8a77c"/><rect x="1" y="11" width="14" height="8" rx="4" transform="rotate(-45 8 15)" class="ln" stroke="#e8a77c"/></svg>Vínculos de Revit</li>
                    </ul>
                </div>
            </section>
        </aside>

        <!-- Área de vistas -->
        <section class="views">
            <nav class="doc-tabs">
                <a class="dtab faded" href="#"><svg><use href="#house"/></svg>{3D}</a>
                <a class="dtab" href="#"><svg><use href="#section"/></svg>Sección 1</a>
                <a class="dtab current" href="#"><svg><use href="#house"/></svg>{3D}<svg class="x"><use href="#close"/></svg></a>
                <a class="dtab" href="#"><svg viewBox="0 0 24 24"><path d="m12 0 12 13H0z" fill="#9a9ea6"/><path d="M5 13h14v10H5z" class="ln" stroke="#9a9ea6"/></svg>Norte</a>
                <button class="tab-list" aria-label="Lista de pestañas"><svg viewBox="0 0 14 12"><path d="M0 0h14v2H0zM1 5h12l-6 7z" fill="#b4b9c4"/></svg></button>
            </nav>
            <div class="view-main">
                <div class="canvas">
                    <svg class="model" viewBox="336 294 2197 1008">
                        <path fill-rule="evenodd" fill="#8aa2df" stroke="#003bc0" stroke-width="4" d="M867 367h718a58 58 0 0 1 58 58v718a58 58 0 0 1-58 58H867a58 58 0 0 1-58-58V425a58 58 0 0 1 58-58zM898 415a40 40 0 0 0-40 40v658a40 40 0 0 0 40 40h656a40 40 0 0 0 40-40V455a40 40 0 0 0-40-40z"/>
                        <!-- pinzamientos -->
                        <g fill="#5b82d8" stroke="#3a4252" stroke-width="1">
                            <path d="m788 784 18-6v12zM879 784l-18-6v12zM1573 784l18-6v12zM1664 784l-18-6v12z"/>
                            <path d="m1226 346-6 18h12zM1226 435l-6-18h12zM1226 1132l-6 18h12zM1226 1222l-6-18h12z"/>
                            <path d="m811 369 17 9-9 8zM1641 369l-17 9 9 8zM811 1199l17-9-9-8zM1641 1199l-17-9 9-8z"/>
                            <path d="m885 442-17-9 9-8zM1567 442l17-9-9-8zM885 1126l-17 9 9 8zM1567 1126l17 9-9 8z"/>
                        </g>
                    </svg>
                    <svg class="compass" viewBox="0 0 190 190">
                        <circle cx="95" cy="95" r="77" fill="none" stroke="#f3f3f3" stroke-width="20"/>
                        <circle cx="95" cy="95" r="87" fill="none" stroke="#c4c4c4"/>
                        <circle cx="95" cy="95" r="67" fill="none" stroke="#c4c4c4"/>
                        <path d="M58 58h73v73H58z" class="cube"/>
                        <path d="M72 72h46v46H72z" fill="#e6e8ea"/>
                        <text x="95" y="101" class="face">SUPERIOR</text>
                        <g class="dirs"><text x="95" y="26">N</text><text x="95" y="187">S</text><text x="15" y="106">O</text><text x="175" y="106">E</text></g>
                    </svg>
                    <div class="navbar">
                        <svg class="dot" viewBox="0 0 12 12"><circle cx="6" cy="6" r="5" fill="#e4e4e4" stroke="#b4b4b4" stroke-width="2"/><path d="m4 4 4 4m0-4L4 8" stroke="#999"/></svg>
                        <button aria-label="Rueda de navegación"><svg viewBox="0 0 36 36"><path d="M11 1h17v16a13 13 0 0 1-13 13A14 14 0 0 1 1 15 12 12 0 0 1 11 1z" fill="#e8eaed" stroke="#9a9ea6" stroke-width="2"/><circle cx="15" cy="15" r="7" fill="#f6f6f6" stroke="#9a9ea6" stroke-width="2"/><path d="m20 22 4-4h12l-1 14-4 4H20z" fill="#acc9ea" stroke="#7fa3cd"/></svg><i class="caret"></i></button>
                        <button aria-label="Zoom de región"><svg viewBox="0 0 36 36"><path d="M6 6h17v17H6z" fill="#b5cfa5" stroke="#8db07b"/><circle cx="23" cy="23" r="6" fill="#eef2f5" stroke="#9a9ea6" stroke-width="2"/><path d="m27 27 4 4" stroke="#999" stroke-width="3"/></svg><i class="caret"></i></button>
                        <svg class="dot" viewBox="0 0 12 12"><circle cx="6" cy="6" r="5" fill="#e4e4e4" stroke="#b4b4b4" stroke-width="2"/><path d="M3 6h6" stroke="#999"/></svg>
                    </div>
                </div>
                <div class="vscroll">
                    <button aria-label="Subir vista"><svg viewBox="0 0 16 10"><path d="m2 8 6-6 6 6" class="chev"/></svg></button>
                    <i class="thumb"></i>
                    <button aria-label="Bajar vista"><svg viewBox="0 0 16 10"><path d="m2 2 6 6 6-6" class="chev"/></svg></button>
                </div>
            </div>
            <div class="view-bar">
                <button class="scale">1 : 500</button>
                <button aria-label="Nivel de detalle"><svg viewBox="0 0 24 24"><path d="M0 3h24v18H0z" class="w"/><path d="M8 9h8v6H8zM3 5h5v4H3zM16 5h5v4h-5zM3 15h5v4H3zM16 15h5v4h-5z" fill="#8a8a8a"/></svg></button>
                <button aria-label="Estilo visual"><svg viewBox="0 0 24 24"><path d="m1 6 6-5h15v15l-5 7H1z" fill="#e8f3fc"/><path d="M1 7h5v5H1zM11 7h5v5h-5zM6 12h5v5H6zM1 17h5v5H1zM11 17h5v5h-5zM7 2h5v4H7zM16 2h4v4h-4zM18 8h3v5h-3zM17 14h3v5h-3z" fill="#5db1f5"/></svg></button>
                <button aria-label="Región de recorte"><svg viewBox="0 0 24 24"><path d="M7 24V8h17" fill="none" stroke="#d9d9d9" stroke-width="3"/><path d="M15 1h3v4h-3zM0 16h4v3H0z" fill="#5db1f5"/><path d="m14 14 9 9m0-9-9 9" stroke="#ff6464" stroke-width="3"/></svg></button>
                <button aria-label="Mostrar recorte"><svg viewBox="0 0 24 24"><path d="M7 24V8h17" fill="none" stroke="#d9d9d9" stroke-width="3"/><path d="M15 1h3v4h-3zM0 16h4v3H0z" fill="#5db1f5"/><use href="#bulb" x="13" y="9" width="11" height="15"/></svg></button>
                <button aria-label="Vista bloqueada"><svg viewBox="0 0 24 24"><use href="#house" width="24" height="24"/><path d="M11 14h12v10H11z" fill="#72d5de"/><path d="M18 14v-3a3 3 0 0 1 5 0" class="ln" stroke="#72d5de"/><path d="M16 17h2v4h-2z" fill="#222933"/></svg></button>
                <button aria-label="Ocultar temporalmente"><svg viewBox="0 0 24 24"><circle cx="6" cy="14" r="4" class="lw"/><circle cx="16" cy="14" r="4" class="lw"/><path d="m3 11 6-5M14 10l6-5 3 2" class="lw"/></svg></button>
                <button aria-label="Mostrar restricciones"><svg viewBox="0 0 24 24"><path d="M1 1v22M21 1v7M3 4h17M3 16h10" class="lw" stroke-dasharray="20 2"/><use href="#bulb" x="13" y="9" width="11" height="15"/></svg></button>
                <button aria-label="Vista previa"><svg viewBox="0 0 24 24"><path d="M0 1h23v10H0z" class="w"/><path d="M0 14h14" class="lw"/><use href="#bulb" x="13" y="9" width="11" height="15"/></svg></button>
                <button class="hide" aria-label="Contraer"><svg viewBox="0 0 10 16"><path d="M8 2 2 8l6 6" class="chev"/></svg></button>
                <div class="hscroll"><i class="thumb"></i></div>
                <button class="end" aria-label="Derecha"><svg viewBox="0 0 10 16"><path d="m2 2 6 6-6 6" class="chev"/></svg></button>
                <svg class="grip" viewBox="0 0 12 12"><path d="M8 0h4v4H8zM8 7h4v4H8zM1 7h4v4H1z" fill="#7d8087"/></svg>
            </div>
        </section>
    </main>

    <footer class="status">
        <p>Clic para seleccionar, TAB para alternar, CTRL para añadir y MAYÚS para anular una selección.</p>
        <div class="filters">
            <button class="q" aria-label="Seleccionar vínculos"><svg viewBox="0 0 24 24"><path d="M10 7H5a3 3 0 0 1 0-6h5c4 0 4 6 8 6h1a3 3 0 0 0 0-6h-6" class="ln" stroke="#e8a77c"/><use href="#cursor" x="12" y="9" width="10" height="15"/></svg></button>
            <button class="q" aria-label="Seleccionar subyacentes"><svg viewBox="0 0 24 24"><path d="m4 9 9-8 4 4-6 5zM0 16l5-5h10l5 5z" class="b"/><path d="m14 1 9 9m0-9-9 9" stroke="#ff6464" stroke-width="3"/><use href="#cursor" x="12" y="9" width="10" height="15"/></svg></button>
            <button class="q" aria-label="Seleccionar bloqueados"><svg viewBox="0 0 24 24"><path d="M2 1h12v3h-2v6l3 4H0l3-4V4H2z" class="w"/><path d="M7 14v7" stroke="#8a8f99" stroke-width="2"/><use href="#cursor" x="10" y="8" width="11" height="16"/></svg></button>
            <button class="q" aria-label="Seleccionar por cara"><svg viewBox="0 0 24 24"><path d="m1 6 12-6v20L1 24z" class="b"/><path d="m14 1 9 9m0-9-9 9" stroke="#ff6464" stroke-width="3"/><use href="#cursor" x="12" y="9" width="10" height="15"/></svg></button>
            <button class="q" aria-label="Arrastrar al seleccionar"><svg viewBox="0 0 24 24"><path d="M10 1v18M1 10h18" class="lw"/><path d="m10 0 3 4H7zM10 20l3-4H7zM0 10l4-3v6z" fill="#fff"/><use href="#cursor" x="13" y="9" width="10" height="15"/></svg></button>
            <button class="q" aria-label="Procesos"><svg viewBox="0 0 24 24"><circle cx="12" cy="12" r="10" fill="none" stroke="#777d88" stroke-width="4" stroke-dasharray="0 7.85" stroke-linecap="round"/></svg></button>
            <button class="count"><svg viewBox="0 0 24 24"><path d="M0 0h24v3l-9 9v10l-6 2V12L0 3z" fill="#bdbdbd"/><path d="M0 0h24v3H0z" fill="#eee"/></svg>:1</button>
        </div>
    </footer>
    <div class="taskbar"></div>

</body>
</html>
```
FILE: styles.css
```css
* {
    box-sizing: border-box;
}

body {
    display: flex;
    flex-direction: column;
    height: 100vh;
    margin: 0;
    background-color: #3b4453;
    color: #f2f3f5;
    overflow: hidden;
    font-family: "Open Sans", "Noto Sans", sans-serif;
    font-size: 17px;
    line-height: 24px;
}

h1, h2, p, ul {
    margin: 0;
    padding: 0;
    font-size: inherit;
    font-weight: 400;
}

button, input, select {
    margin: 0;
    padding: 0;
    border: none;
    border-radius: 0;
    background: none;
    color: inherit;
    font: inherit;
    white-space: nowrap;
}

button {
    display: flex;
    align-items: center;
    justify-content: center;
    flex-shrink: 0;
}

svg {
    display: block;
    width: 24px;
    height: 24px;
    flex-shrink: 0;
}

.sprite {
    position: absolute;
    width: 0;
    height: 0;
}

/* Colores de los iconos */
.w { fill: #d9d9d9; }
.b { fill: #86c8f8; }
.y { fill: #ffd07a; }
.r { fill: #ff6464; }
.g { fill: #777d88; }
.ln { fill: none; stroke-width: 2; }
.lw { fill: none; stroke: #d9d9d9; stroke-width: 2; }
.chev { fill: none; stroke: #a3a8b2; stroke-width: 3; }

.caret {
    border: 4px solid transparent;
    border-top: 5px solid #fff;
    border-bottom: none;
}

.caret.wide {
    border-width: 6px;
    border-top-width: 7px;
    border-bottom: none;
}

/* Barra de título */
.titlebar {
    display: grid;
    grid-template-columns: auto 1fr auto auto;
    align-items: center;
    height: 43px;
    padding-bottom: 3px;
    background-color: #222933;
}

.quick,
.account,
.window-buttons {
    display: flex;
    align-items: center;
}

.logo {
    width: 38px;
}

.logo svg {
    width: 32px;
    height: 34px;
}

.q {
    width: 36px;
    height: 36px;
}

.q.first {
    margin-right: 7px;
}

.q.small {
    width: 28px;
}

.q.small svg {
    width: 16px;
    height: 12px;
}

.more {
    width: 18px;
    height: 36px;
}

.dim .caret {
    opacity: 0.6;
}

.sep {
    width: 2px;
    height: 32px;
    margin: 0 4px;
    background-color: #3e4857;
}

.title {
    align-self: start;
    padding: 4px 0 0 48px;
    text-align: center;
}

.account {
    justify-content: flex-end;
    padding-right: 88px;
}

.user {
    gap: 7px;
    padding: 0 12px 0 6px;
}

.window-buttons {
    gap: 14px;
    padding-right: 7px;
}

.window-buttons svg {
    width: 24px;
    height: 22px;
}

/* Pestañas de la cinta */
.ribbon-tabs {
    display: flex;
    height: 30px;
    padding-left: 2px;
    background-color: #222933;
}

.rtab {
    padding: 0 14px 0 15px;
}

.rtab.file {
    padding: 0 13px;
    margin-right: 4px;
    background-color: #2a7ab0;
}

.rtab.active {
    padding: 0 8px;
    border: 2px solid #424f4f;
    border-bottom: none;
    background-color: #3a8a08;
}

.collapse {
    gap: 7px;
    margin-left: 36px;
}

.collapse svg {
    width: 20px;
    height: 12px;
}

/* Cinta de opciones */
.ribbon {
    display: flex;
    background-color: #424f4f;
    border-bottom: 2px solid #222933;
}

.group {
    display: flex;
    gap: 2px;
    padding: 4px 0 0 3px;
}

.group.context {
    flex: 1;
    margin-left: -1px;
    padding: 2px 0 0 8px;
    border-top: 2px solid #3a8a08;
}

.panel {
    display: flex;
    flex-direction: column;
    height: 140px;
    background-color: #3b4453;
}

.tools {
    display: flex;
    flex: 1;
    justify-content: center;
}

.panel h2 {
    display: flex;
    align-items: center;
    justify-content: center;
    gap: 8px;
    height: 27px;
    padding-top: 3px;
}

.context .panel h2 {
    margin: 0 2px;
    background-color: #424f4f;
}

.context .p-edit h2 {
    margin-right: 0;
    background-color: #3b5070;
}

.p-select { width: 125px; }
.p-props { width: 123px; }
.p-clip { width: 121px; }
.p-geo { width: 178px; }
.p-ctrl { width: 90px; }
.p-mod { width: 356px; }
.p-meas { width: 82px; }
.p-new { width: 64px; }
.p-ext { width: 172px; }
.p-mode { width: 232px; }
.p-plane { width: 284px; }
.p-place { width: 180px; }
.p-edit { width: 152px; }

.big {
    flex-direction: column;
    justify-content: flex-start;
    padding: 9px 2px 0;
    line-height: 25px;
}

.big svg {
    width: 48px;
    height: 48px;
    margin-bottom: 6px;
}

.big .caret {
    margin-top: 4px;
}

.on {
    border: 2px solid #2f6f92;
    background-color: #3d5266;
}

.p-select .big {
    width: 84px;
    height: 109px;
    margin-top: 3px;
    padding-top: 4px;
}

.off {
    color: #6f7682;
}

.off .caret {
    border-top-color: #a3a8b2;
}

.ico {
    width: 56px;
    height: 52px;
}

.ico svg {
    width: 48px;
    height: 48px;
}

.grid2,
.grid3,
.grid4 {
    display: grid;
    align-content: start;
    row-gap: 2px;
    padding-top: 5px;
}

.grid2 {
    grid-template-columns: auto auto;
}

.p-props .grid2 {
    column-gap: 4px;
}

.p-meas .ico {
    width: 50px;
}

.p-meas .more {
    height: 52px;
}

.p-new .grid2 {
    grid-template-columns: auto;
}

.grid4 {
    grid-template-columns: repeat(4, 58px);
}

.grid3 {
    grid-template-columns: repeat(3, 39px);
    row-gap: 12px;
    padding-top: 10px;
}

.sm {
    height: 24px;
}

.stack {
    display: flex;
    flex-direction: column;
    gap: 12px;
    padding: 11px 0 0 20px;
}

.geo {
    flex-direction: column;
    align-items: stretch;
    justify-content: flex-start;
    gap: 4px;
    padding: 26px 9px 0;
}

.line {
    display: flex;
    justify-content: space-between;
    height: 32px;
    align-items: center;
}

.row {
    gap: 8px;
}

.row .caret {
    margin-left: 4px;
}

.line .sm {
    width: 45px;
    justify-content: flex-start;
}

.sm.wide {
    gap: 10px;
}

.depth {
    flex-direction: column;
    justify-content: flex-start;
    gap: 4px;
    padding: 28px 3px 0 5px;
}

.depth label {
    display: flex;
    align-items: center;
    gap: 4px;
}

.depth input {
    width: 100%;
    height: 31px;
    padding: 0 6px 2px;
    border: 1px solid #353d4a;
    background-color: #2c333f;
}

.p-mode .tools {
    gap: 4px;
}

.plane {
    position: relative;
    flex: 1;
    padding-top: 8px;
    padding-right: 14px;
}

.plane .caret {
    position: absolute;
    right: 12px;
    bottom: 24px;
}

.ruled {
    margin-top: 4px;
    padding: 5px 5px 0;
    height: 107px;
    border-left: 1px solid #4b5666;
}

.placing {
    flex-direction: column;
    justify-content: flex-start;
    gap: 2px;
    padding: 24px 3px 0 2px;
}

.placing .row {
    justify-content: flex-start;
    height: 33px;
    padding-left: 5px;
    border: 2px solid transparent;
}

.placing .on {
    border-color: #2f6f92;
}

/* Barra de opciones */
.options-bar {
    height: 42px;
    padding: 8px 13px;
    background-color: #424f4f;
    border-bottom: 3px solid #4f5b69;
}

/* Zona de trabajo */
.workspace {
    display: flex;
    flex: 1;
    min-height: 0;
}

.side {
    display: flex;
    flex-direction: column;
    width: 333px;
    border-right: 3px solid #4f5b69;
    background-color: #2e3440;
}

.palette header {
    display: flex;
    align-items: center;
    justify-content: space-between;
    height: 25px;
    padding: 0 3px 0 4px;
    background-color: #222933;
    white-space: nowrap;
}

.palette header svg {
    width: 18px;
    height: 18px;
    color: #b9bdc6;
}

.palette-body {
    margin: 2px 3px 0;
    background-color: #3b4453;
}

.props {
    height: 537px;
    border-bottom: 3px solid #4f5b69;
}

.type-box {
    justify-content: space-between;
    width: 322px;
    height: 104px;
    margin-left: 1px;
    padding: 0 9px 0 3px;
    border: 2px solid #454f61;
    border-bottom: none;
}

.type-box svg {
    width: 99px;
    height: 99px;
    border: 2px solid #454f61;
}

.type-box .caret {
    border-top-color: #7787a0;
}

.type-row {
    display: flex;
    height: 41px;
    padding-bottom: 3px;
}

.type-row select {
    width: 208px;
    height: 36px;
    padding-left: 5px;
    appearance: none;
    border-bottom: 2px solid #6b788c;
    background: linear-gradient(45deg, transparent 40%, #7787a0 40%, #7787a0 65%, transparent 65%) 190px 13px / 7px 7px no-repeat,
        linear-gradient(-45deg, transparent 40%, #7787a0 40%, #7787a0 65%, transparent 65%) 196px 13px / 7px 7px no-repeat;
}

.type-row button {
    flex: 1;
    gap: 5px;
    background-color: #2f3541;
    color: #8a8f99;
}

.type-row svg {
    width: 16px;
    height: 16px;
}

.prop-grid {
    display: flex;
    height: 326px;
    overflow: hidden;
}

.prop-grid table {
    width: 298px;
    height: 330px;
    table-layout: fixed;
    border-collapse: collapse;
}

.c-name { width: 139px; }
.c-value { width: 141px; }
.c-link { width: 18px; }

.prop-grid tr {
    height: 30px;
}

.prop-grid td {
    height: 30px;
    padding: 0 0 2px 12px;
    border-bottom: 1px dotted #4b5666;
    white-space: nowrap;
}

.prop-grid td:first-child {
    border-right: 1px dotted #4b5666;
}

.prop-grid tr.cat {
    background-color: #222933;
}

.prop-grid th {
    height: 30px;
    padding: 0 0 0 3px;
    text-align: left;
    font-weight: 400;
}

.prop-grid th svg {
    float: right;
    width: 10px;
    height: 12px;
    margin: 0 4px 0 0;
}

.prop-grid td:nth-child(2) {
    padding: 0;
}

.prop-grid td.val {
    padding: 0 0 2px 5px;
}

.prop-grid td:nth-child(3) {
    padding: 1px;
}

.prop-grid td:nth-child(3) button {
    width: 15px;
    height: 27px;
    border: 1px solid #7787a0;
}

.prop-grid .dim {
    color: #8a8f99;
}

.prop-grid input[type="text"] {
    display: block;
    width: 140px;
    height: 29px;
    padding: 0 0 2px 2px;
    border: 1px solid transparent;
}

.prop-grid input.focus {
    border-color: #c9c3b4;
}

.prop-grid input[type="checkbox"] {
    display: block;
    position: relative;
    width: 18px;
    height: 18px;
    appearance: none;
    background-color: #a9adb6;
}

.prop-grid input:checked::after {
    content: "";
    position: absolute;
    left: 6px;
    top: 2px;
    width: 6px;
    height: 11px;
    border: solid #2e3440;
    border-width: 0 3px 3px 0;
    transform: rotate(45deg);
}

.edit {
    width: 137px;
    height: 27px;
    margin-left: 1px;
    border: 1px solid #7787a0;
}

.vscroll {
    display: flex;
    flex-direction: column;
    align-items: center;
    justify-content: space-between;
    width: 26px;
    background-color: #323844;
}

.vscroll button {
    width: 26px;
    height: 26px;
}

.vscroll button svg {
    width: 16px;
    height: 10px;
}

.vscroll .thumb {
    width: 8px;
    height: 24px;
    border-radius: 4px;
    background-color: #4b5666;
}

.prop-grid .vscroll .thumb {
    height: 208px;
    margin-bottom: 66px;
}

.sort-row {
    display: flex;
    align-items: center;
    gap: 4px;
    height: 36px;
    padding: 0 3px 2px 2px;
    background-color: #2e3440;
}

.sort-row button {
    width: 32px;
    height: 32px;
    background-color: #3b4453;
}

.sort-row .on {
    border-radius: 4px;
    background-color: #37708d;
}

.sort-row .apply {
    width: 108px;
    height: 28px;
    margin-left: auto;
    border: 1px solid #4b5666;
    border-radius: 4px;
    background: none;
    color: #777d88;
}

/* Navegador de proyectos */
.browser {
    display: flex;
    flex: 1;
    flex-direction: column;
    min-height: 0;
    border-bottom: 3px solid #2e3440;
}

.browser .palette-body {
    flex: 1;
    margin-top: 1px;
    overflow: hidden;
}

.search {
    display: flex;
    align-items: center;
    gap: 12px;
    height: 34px;
    margin: 15px 12px 12px;
    padding-left: 12px;
    background-color: #2c333f;
}

.search input {
    flex: 1;
    min-width: 0;
    font-weight: 600;
}

.search input::placeholder {
    color: #8a8f99;
}

.tree {
    list-style: none;
}

.tree li {
    display: flex;
    position: relative;
    align-items: center;
    gap: 7px;
    height: 30px;
    padding-left: 7px;
    white-space: nowrap;
}

.tree li svg {
    margin-left: 5px;
}

.tree li.leaf {
    padding-left: 24px;
}

.tree .selected {
    padding-left: 6px;
    border: 1px solid #454f61;
    background-color: #343b49;
}

.tree .l2 {
    padding-left: 31px;
    gap: 13px;
}

.tree .l3 {
    padding-left: 80px;
}

.tree .active {
    font-weight: 700;
}

.minus,
.plus {
    flex-shrink: 0;
    width: 12px;
    height: 12px;
    background: linear-gradient(#a3a8b2, #a3a8b2) center / 12px 4px no-repeat;
}

.plus {
    background: linear-gradient(#a3a8b2, #a3a8b2) center / 12px 4px no-repeat,
        linear-gradient(#a3a8b2, #a3a8b2) center / 4px 12px no-repeat;
}

/* Líneas del árbol */
.l2::before,
.l3::before {
    content: "";
    position: absolute;
    left: 12px;
    top: 0;
    width: 13px;
    height: 16px;
    border-left: 1px dashed #6b6f78;
    border-bottom: 1px dashed #6b6f78;
}

.l3::before {
    left: 36px;
    width: 37px;
}

.l2.last::before {
    top: -44px;
    height: 60px;
}

.l3:not(.last)::after {
    content: "";
    position: absolute;
    left: 36px;
    top: 16px;
    height: 14px;
    border-left: 1px dashed #6b6f78;
}

/* Vistas */
.views {
    display: flex;
    flex: 1;
    flex-direction: column;
    min-width: 0;
    background-color: #222933;
}

.doc-tabs {
    display: flex;
    height: 33px;
    border-bottom: 3px solid #222933;
    background-color: #454f61;
}

.dtab {
    display: flex;
    align-items: center;
    gap: 10px;
    width: 192px;
    padding: 0 6px 0 8px;
    color: inherit;
    text-decoration: none;
}

.dtab.faded svg {
    opacity: 0.6;
}

.dtab.current {
    background-color: #222933;
    font-weight: 700;
}

.dtab .x {
    width: 18px;
    height: 18px;
    margin-left: auto;
    color: #b9bdc6;
}

.tab-list {
    margin-left: auto;
    padding-right: 6px;
}

.tab-list svg {
    width: 14px;
    height: 11px;
}

.view-main {
    display: flex;
    flex: 1;
    min-height: 0;
    padding: 0 1px 0 3px;
}

.canvas {
    position: relative;
    flex: 1;
    background-color: #fff;
}

.model {
    width: 100%;
    height: 100%;
}

.compass {
    position: absolute;
    top: 33px;
    right: 33px;
    width: 190px;
    height: 190px;
}

.cube {
    fill: #efefef;
    stroke: #999;
    filter: drop-shadow(0 0 6px rgba(0, 0, 0, 0.3));
}

.face {
    text-anchor: middle;
    font-family: "Open Sans", sans-serif;
    font-size: 13px;
    font-weight: 700;
    fill: #9a9da2;
}

.dirs {
    text-anchor: middle;
    font-size: 28px;
    font-weight: 700;
    fill: #e4e4e4;
    stroke: #a8a8a8;
}

.navbar {
    display: flex;
    position: absolute;
    top: 243px;
    right: 1px;
    flex-direction: column;
    align-items: center;
    width: 49px;
    height: 168px;
    padding: 2px;
    border: 2px solid #bcbcbc;
    border-radius: 5px;
    background-color: #f4f4f4;
}

.navbar button {
    flex: 1;
    flex-direction: column;
    gap: 8px;
}

.navbar button:nth-of-type(1) {
    width: 40px;
    border-bottom: 1px solid #bcbcbc;
}

.navbar button svg {
    width: 36px;
    height: 36px;
}

.navbar .caret {
    border-top-color: #8a8f99;
}

.dot {
    width: 12px;
    height: 12px;
    align-self: flex-end;
}

/* Barra de control de vista */
.view-bar {
    display: flex;
    align-items: center;
    height: 29px;
    margin-left: 3px;
    border-bottom: 3px solid #222933;
    background-color: #3b4453;
}

.view-bar button {
    width: 38px;
    height: 26px;
}

.view-bar .scale {
    width: 117px;
    padding-left: 5px;
}

.view-bar .hide {
    width: 25px;
    background-color: #323844;
}

.view-bar .hide svg,
.view-bar .end svg {
    width: 10px;
    height: 16px;
}

.view-bar .end {
    width: 26px;
    background-color: #323844;
    border-left: 1px solid #3e4a59;
}

.hscroll {
    display: flex;
    flex: 1;
    align-items: center;
    height: 26px;
    border-left: 1px solid #3e4a59;
    background-color: #323844;
}

.hscroll .thumb {
    width: 26px;
    height: 8px;
    margin: 0 auto;
    border-radius: 4px;
    background-color: #4b5666;
}

.grip {
    width: 27px;
    height: 26px;
    padding: 10px 6px 4px 9px;
    background-color: #2e3440;
}

/* Barra de estado */
.status {
    display: flex;
    align-items: center;
    justify-content: space-between;
    height: 39px;
    padding: 0 70px 0 2px;
    border-bottom: 3px solid #43464f;
}

.status p {
    padding-top: 4px;
}

.filters {
    display: flex;
    align-items: center;
}

.count {
    gap: 2px;
    padding-left: 2px;
}

.taskbar {
    height: 9px;
    background: radial-gradient(circle at 57px 16px, #e8616c 10px, transparent 11px),
        linear-gradient(90deg, #192228, #181f36 32%, #2b1830 60%, #38142f);
}
```
